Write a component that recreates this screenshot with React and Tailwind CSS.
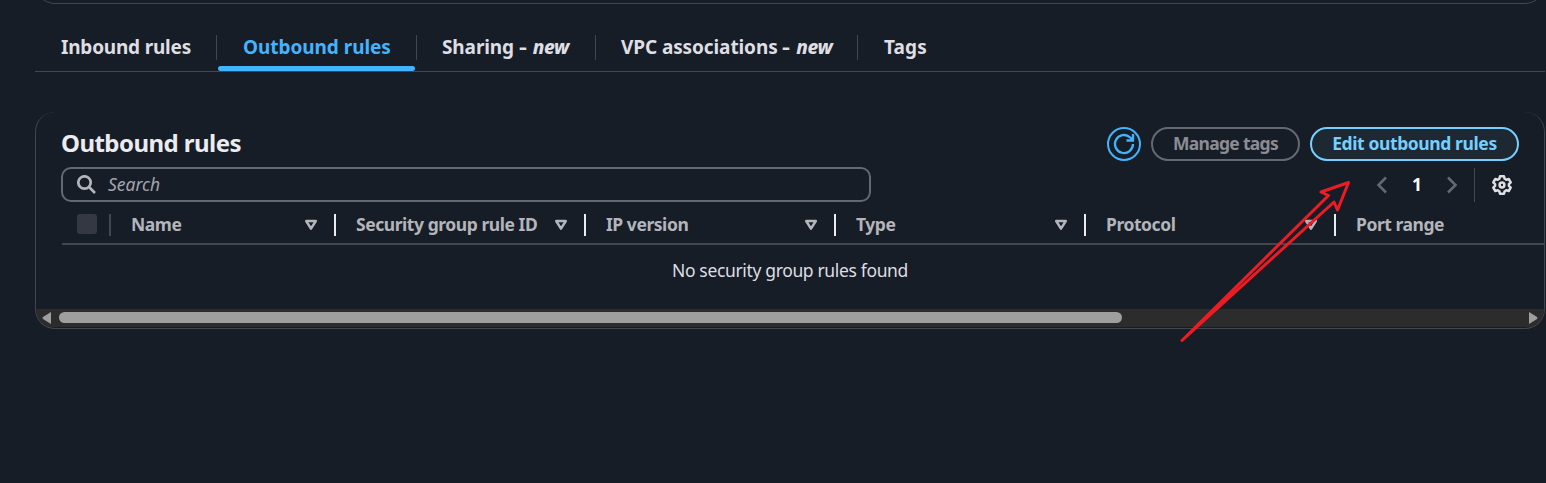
function SortIcon() {
  return (
    <svg width="14" height="12" viewBox="0 0 14 12" fill="none" className="mt-[3px] shrink-0">
      <path d="M2.2 2h9.6L7 9.6z" stroke="#b4b4bb" strokeWidth="2.5" strokeLinejoin="round" />
    </svg>
  );
}

function Column({ label, width, last }) {
  return (
    <div className={`flex shrink-0 items-center pl-5 ${width}`}>
      <span className="grow pt-px text-[17.5px] leading-6 font-bold tracking-[-0.45px] whitespace-nowrap text-[#b4b4bb]">{label}</span>
      {!last && <SortIcon />}
      {!last && <span className="mt-[3px] ml-4 h-[22px] w-0.5 shrink-0 bg-[#ebebf0]" />}
    </div>
  );
}

function Tab({ width, children, active, last }) {
  return (
    <div className={`flex h-full shrink-0 flex-col ${width}`}>
      <div className={`mt-[31px] flex h-[25px] items-center whitespace-nowrap text-[19px] leading-[25px] font-bold ${last ? "" : "border-r border-[#424650]"} ${active ? "text-[#42b4ff]" : "text-[#dedee3]"}`}>
        {children}
      </div>
      {active && <div className="mt-[6px] mr-[2px] ml-px h-[5px] rounded-[3px] bg-[#42b4ff]" />}
    </div>
  );
}

function NewMark() {
  return (
    <>
      <span className="mr-px inline-block origin-left scale-x-[1.3] pr-0.5">-</span> <i className="font-extrabold tracking-[-0.4px]">new</i>
    </>
  );
}

export default function App() {
  return (
    <div className="relative h-[483px] w-[1546px] overflow-hidden bg-[#161d26] pl-[35px] font-['Noto_Sans','Open_Sans',sans-serif]">
      <div className="flex h-1 w-[1510px] flex-col justify-end overflow-hidden">
        <div className="h-10 w-full shrink-0 rounded-[20px] border border-[#424650]" />
      </div>

      <nav className="flex h-[68px] w-[1510px] border-b border-[#424650]">
        <Tab width="w-[182px]"><span className="pl-[26px] tracking-[-0.2px]">Inbound rules</span></Tab>
        <Tab width="w-[200px]" active><span className="pl-[26px] tracking-[-0.05px]">Outbound rules</span></Tab>
        <Tab width="w-[179px]"><span className="pl-[25px] tracking-[-0.1px]">Sharing <NewMark /></span></Tab>
        <Tab width="w-[262px]"><span className="pl-[25px] tracking-[-0.1px]">VPC associations <NewMark /></span></Tab>
        <Tab width="w-[120px]" last><span className="pl-[26px] tracking-[0.1px]">Tags</span></Tab>
      </nav>

      <section className="mt-10 flex h-[217px] w-[1510px] flex-col overflow-hidden rounded-[20px] border border-t-0 border-[#424650]">
        <header className="flex h-[55px] items-center pr-[25px] pl-[25px] pt-2">
          <h2 className="-mt-0.5 grow text-[24px] leading-8 font-bold tracking-[-0.55px] text-[#ebebf0]">Outbound rules</h2>
          <button className="flex size-[34px] items-center justify-center rounded-full border-2 border-[#42b4ff]">
            <svg width="22" height="22" viewBox="0 0 22 22" fill="none" stroke="#42b4ff" strokeWidth="2.3">
              <path d="M20 11a9 9 0 1 1-3-6.7l3 3" />
              <path d="M20 1v6.500h-6.500" />
            </svg>
          </button>
          <button className="ml-[10px] flex h-[34px] w-[149px] items-center justify-center rounded-full border-2 border-[#656871] text-[17.5px] font-bold tracking-[-0.7px] whitespace-nowrap text-[#8c8c94]">Manage tags</button>
          <button className="ml-[10px] flex h-[34px] w-[209px] items-center justify-center rounded-full border-2 border-[#75cfff] bg-[#1d2832] text-[17.5px] font-bold tracking-[-0.4px] whitespace-nowrap text-[#75cfff]">Edit outbound rules</button>
        </header>

        <div className="flex h-[35px] items-center pl-[25px]">
          <div className="flex h-[35px] w-[810px] items-center rounded-[10px] border-2 border-[#656871] pl-[14px]">
            <svg width="20" height="20" viewBox="0 0 20 20" fill="none" stroke="#b4b4bb" strokeWidth="2.7">
              <circle cx="7.500" cy="7.500" r="6.200" />
              <path d="m12 12 6 6" />
            </svg>
            <span className="-mt-px ml-[11px] text-[17.5px] text-[#a4a4ad] italic">Search</span>
          </div>
          <div className="ml-[505px] flex h-[35px] items-center">
            <svg width="12" height="18" viewBox="0 0 12 18" fill="none" stroke="#656871" strokeWidth="2.5"><path d="M10 1.5 2.5 9l7.5 7.5" /></svg>
            <span className="-mt-px w-[58px] text-center text-[17.5px] font-bold text-white">1</span>
            <svg width="12" height="18" viewBox="0 0 12 18" fill="none" stroke="#656871" strokeWidth="2.5"><path d="M2 1.5 9.5 9 2 16.5" /></svg>
            <span className="ml-4 h-[34px] w-px bg-[#424650]" />
            <svg className="ml-[17px]" width="20" height="20" viewBox="0 0 20 20" fill="none" stroke="#dedee3" strokeWidth="2.5" strokeLinejoin="round">
              <path d="M8 1.3h4l.7 2.5 1.5.9 2.5-.7 2 3.4-1.8 1.8v1.6l1.8 1.8-2 3.4-2.5-.7-1.5.9-.7 2.5H8l-.7-2.5-1.5-.9-2.5.7-2-3.4 1.8-1.8V9.2L1.300 7.400l2-3.400 2.500.7 1.500-.9z" />
              <circle cx="10" cy="10" r="2.400" />
            </svg>
          </div>
        </div>

        <div className="ml-[26px] flex h-[43px] w-[1482px] shrink-0 overflow-hidden border-b-2 border-[#424650] pt-0.5">
          <div className="flex w-[49px] shrink-0 items-center justify-between pl-[15px]">
            <span className="mt-px size-5 rounded-[3px] bg-[#333843]" />
            <span className="mt-[3px] h-[22px] w-0.5 bg-[#424650]" />
          </div>
          <Column label="Name" width="w-[225px]" />
          <Column label="Security group rule ID" width="w-[250px]" />
          <Column label="IP version" width="w-[250px]" />
          <Column label="Type" width="w-[250px]" />
          <Column label="Protocol" width="w-[250px]" />
          <Column label="Port range" width="w-[250px]" last />
        </div>

        <p className="flex h-[64px] items-start justify-center pt-[13px] text-[17.5px] leading-6 tracking-[-0.35px] text-[#dedee3]">No security group rules found</p>

        <div className="flex h-[18px] shrink-0 items-center bg-[#2c2c2c] pr-[6px] pl-[6px]">
          <svg width="9" height="12" viewBox="0 0 9 12"><path d="M9 0v12L1 7Q0 6 1 5z" fill="#9f9f9f" /></svg>
          <span className="-mt-px ml-2 h-[11px] w-[1063px] rounded-full bg-[#9f9f9f]" />
          <span className="grow" />
          <svg width="9" height="12" viewBox="0 0 9 12"><path d="M0 0v12l8-5q1-1 0-2z" fill="#9f9f9f" /></svg>
        </div>
      </section>

      <svg className="absolute top-[175px] left-[1175px]" width="180" height="172" viewBox="1175 175 180 172" fill="none" stroke="#ed1c24" strokeWidth="3" strokeLinejoin="round">
        <path d="M1182 340.500 1328.500 195.500 1321 192 1348.500 182.500 1337.500 210 1334 202z" />
      </svg>
    </div>
  );
}
